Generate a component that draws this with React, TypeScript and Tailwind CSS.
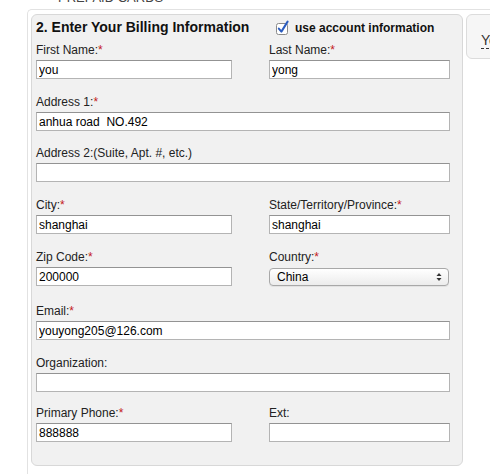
import React from "react";

type FieldProps = {
  label: string;
  required?: boolean;
  value?: string;
  width: string;
};

function Field({ label, required, value, width }: FieldProps) {
  return (
    <div className="flex flex-col">
      <label className="mb-[2px] block h-[15px] text-[12px] leading-[15px] text-[#222]">
        {label}
        {required && <span className="text-[#c41a1a]">*</span>}
      </label>
      <input
        type="text"
        defaultValue={value ?? ""}
        className={`${width} h-[19px] border border-[#b4b4b4] border-t-[#939393] bg-white px-[2px] text-[12px] leading-[17px] text-black outline-none`}
      />
    </div>
  );
}

function CountrySelect() {
  return (
    <div className="flex flex-col">
      <label className="mb-[2px] block h-[15px] text-[12px] leading-[15px] text-[#222]">
        Country:<span className="text-[#c41a1a]">*</span>
      </label>
      <div className="mt-[1px] flex h-[18px] w-[180px] items-center justify-between rounded-[4px] border border-[#a8a8a8] bg-gradient-to-b from-white to-[#ececec] pl-[7px] pr-[6px] text-[12px] leading-[16px] text-black shadow-[0_1px_0_rgba(0,0,0,0.06)]">
        <span>China</span>
        <svg width="6" height="10" viewBox="0 0 6 10">
          <path d="M3 1 L5.5 4 L0.5 4 Z" fill="#333" />
          <path d="M3 9 L5.5 6 L0.5 6 Z" fill="#333" />
        </svg>
      </div>
    </div>
  );
}

function CheckedBox() {
  return (
    <svg width="13" height="16" viewBox="0 0 13 16">
      <rect x="0.5" y="4.5" width="11" height="11" rx="2" fill="white" stroke="#8a8a8a" />
      <path d="M2.8 9.6 L5.4 12.6 L11.6 2.6" fill="none" stroke="#2b5cbf" strokeWidth="2" strokeLinecap="round" strokeLinejoin="round" />
    </svg>
  );
}

export default function App() {
  return (
    <div className="h-[474px] w-[490px] overflow-hidden bg-white font-['Liberation_Sans',Arial,Helvetica,sans-serif]">
      {/* section heading, mostly scrolled out of view */}
      <div className="h-[9px] overflow-hidden pl-[58px]">
        <div className="-mt-[10px] text-[13px] leading-[16px] text-[#444]">PREPAID CARDS</div>
      </div>

      <div className="ml-[27px] flex h-[480px] gap-[3px] rounded-tl-[5px] border-l border-t border-[#e2e2e2] pl-[3px] pt-[4px]">
        {/* billing panel */}
        <div className="h-[452px] w-[432px] shrink-0 rounded-[6px] border border-[#d8d8d8] bg-[#f1f1f1] px-[4px] pt-[4px]">
          <div className="flex h-[16px] items-start">
            <h2 className="w-[240px] text-[14px] font-bold leading-[16px] text-[#111]">
              2. Enter Your Billing Information
            </h2>
            <CheckedBox />
            <span className="ml-[6px] mt-[1px] text-[12px] font-bold leading-[16px] text-[#111]">
              use account information
            </span>
          </div>

          <div className="mt-[8px] flex flex-col">
            <div className="grid grid-cols-[233px_181px]">
              <Field label="First Name:" required value="you" width="w-[196px]" />
              <Field label="Last Name:" required value="yong" width="w-[181px]" />
            </div>
            <div className="mt-[16px]">
              <Field label="Address 1:" required value="anhua road  NO.492" width="w-[414px]" />
            </div>
            <div className="mt-[15px]">
              <Field label="Address 2:(Suite, Apt. #, etc.)" width="w-[414px]" />
            </div>
            <div className="mt-[16px] grid grid-cols-[233px_181px]">
              <Field label="City:" required value="shanghai" width="w-[196px]" />
              <Field label="State/Territory/Province:" required value="shanghai" width="w-[181px]" />
            </div>
            <div className="mt-[16px] grid grid-cols-[233px_181px]">
              <Field label="Zip Code:" required value="200000" width="w-[196px]" />
              <CountrySelect />
            </div>
            <div className="mt-[18px]">
              <Field label="Email:" required value="youyong205@126.com" width="w-[414px]" />
            </div>
            <div className="mt-[16px]">
              <Field label="Organization:" width="w-[414px]" />
            </div>
            <div className="mt-[14px] grid grid-cols-[233px_181px]">
              <Field label="Primary Phone:" required value="888888" width="w-[196px]" />
              <Field label="Ext:" width="w-[181px]" />
            </div>
          </div>
        </div>

        {/* order summary card, cut off at the right */}
        <div className="h-[45px] w-[80px] shrink-0 rounded-[6px] border border-[#dcdcdc] bg-[#f6f6f6] pl-[14px] pt-[13px]">
          <span className="whitespace-nowrap border-b border-dashed border-[#333] text-[14px] leading-[16px] text-[#333]">
            Your Order
          </span>
        </div>
      </div>
    </div>
  );
}
